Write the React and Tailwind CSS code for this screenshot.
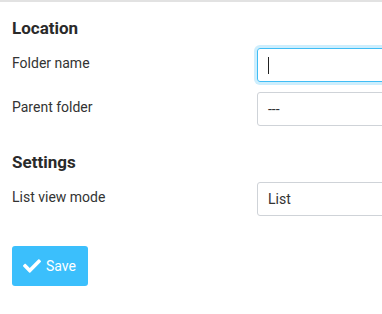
export default function App() {
  const CheckIcon = () => (
    <svg width="18" height="14" viewBox="0 69 512 374" fill="currentColor" aria-hidden="true">
      <path d="M173.898 439.404l-166.4-166.4c-9.997-9.997-9.997-26.206 0-36.204l36.203-36.204c9.997-9.998 26.207-9.998 36.204 0L192 312.69 432.095 72.596c9.997-9.997 26.207-9.997 36.204 0l36.203 36.204c9.997 9.997 9.997 26.206 0 36.204l-294.4 294.401c-9.998 9.997-26.207 9.997-36.204-.001z" />
    </svg>
  );

  return (
    <div className="w-[382px] h-[314px] overflow-hidden bg-white border-t-2 border-[#e2e2e2] font-['Roboto',sans-serif] text-[#333]">
      <div className="w-[560px] pl-3 pt-4">
        <h3 className="text-[17px] leading-[20px] font-bold text-[#2a2a2a] mb-[10px]">Location</h3>
        <div className="flex flex-col gap-[10px]">
          <div className="flex items-start">
            <label className="w-[245px] shrink-0 pt-[5px] text-[14px] leading-[20px]">Folder name</label>
            <div className="flex-1 h-[34px] rounded-[3px] border border-[#40bdf5] ring-[3px] ring-[#cdeefd] flex items-center pl-[10px]">
              <span className="block w-px h-[17px] bg-[#222]" />
            </div>
          </div>
          <div className="flex items-start">
            <label className="w-[245px] shrink-0 pt-[5px] text-[14px] leading-[20px]">Parent folder</label>
            <div className="flex-1 h-[34px] rounded-[3px] border border-[#cfd3d8] flex items-center pl-[10px] text-[14px] leading-[20px]">
              ---
            </div>
          </div>
        </div>
        <h3 className="text-[17px] leading-[20px] font-bold text-[#2a2a2a] mt-[26px] mb-[10px]">Settings</h3>
        <div className="flex items-start">
          <label className="w-[245px] shrink-0 pt-[5px] text-[14px] leading-[20px]">List view mode</label>
          <div className="flex-1 h-[34px] rounded-[3px] border border-[#cfd3d8] flex items-center pl-[10px] text-[14px] leading-[20px]">
            List
          </div>
        </div>
        <button className="mt-[30px] h-[40px] w-[76px] rounded-[3px] bg-[#3bbffc] text-white flex items-center pl-[11px] gap-[5px] text-[14px] leading-[20px] font-normal">
          <CheckIcon />
          <span>Save</span>
        </button>
      </div>
    </div>
  );
}
